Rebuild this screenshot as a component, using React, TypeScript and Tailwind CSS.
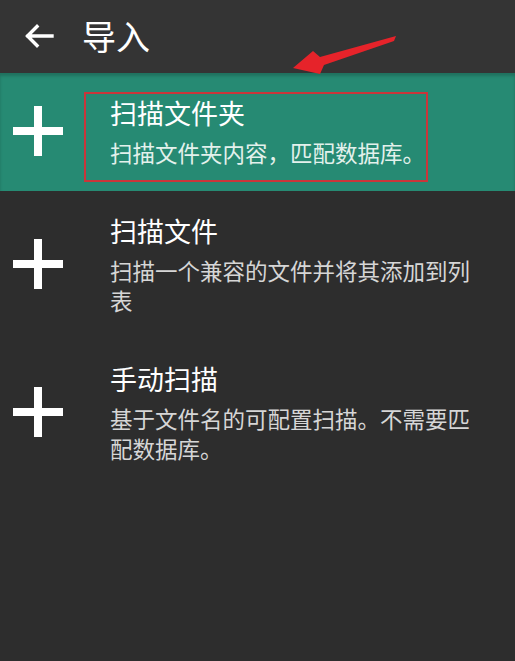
import React from "react";

const font = { fontFamily: '"Noto Sans CJK SC", "Noto Sans", sans-serif' };

function Plus() {
  return (
    <svg width="50" height="50" viewBox="0 0 50 50" className="shrink-0">
      <rect x="21" y="0" width="8" height="50" fill="#ffffff" />
      <rect x="0" y="21" width="50" height="8" fill="#ffffff" />
    </svg>
  );
}

function Row({
  title,
  sub,
  active,
  children,
}: {
  title: string;
  sub: string;
  active?: boolean;
  children?: React.ReactNode;
}) {
  return (
    <div
      className={
        "relative flex items-center pl-[13px] pr-[30px] pt-[22px] pb-[24px] " +
        (active ? "bg-[#268a73] shadow-[inset_0_3px_3px_rgba(0,0,0,0.18)]" : "")
      }
    >
      <Plus />
      <div className="ml-[47px] flex-1 flex flex-col">
        <div className="text-[27px] leading-[36px] text-white">{title}</div>
        <div
          className={
            "mt-[6px] text-[22.5px] leading-[30px] " +
            (active ? "text-[#e3f1ec]" : "text-[#d6d6d6]")
          }
        >
          {sub}
        </div>
      </div>
      {children}
    </div>
  );
}

export default function App() {
  return (
    <div className="relative min-h-screen w-full bg-[#2d2d2d]" style={font}>
      <div className="flex h-[73px] items-center bg-[#343434] pb-[2px]">
        <svg width="30" height="24" viewBox="0 0 30 24" className="ml-[24px]">
          <path
            d="M28 12 H4 M13 2.5 L3.5 12 L13 21.5"
            stroke="#ffffff"
            strokeWidth="3.4"
            fill="none"
            strokeLinecap="square"
          />
        </svg>
        <div className="ml-[28px] text-[34px] leading-none text-white">导入</div>
      </div>

      <Row title="扫描文件夹" sub="扫描文件夹内容，匹配数据库。" active>
        <div className="pointer-events-none absolute left-[84px] top-[19px] h-[90px] w-[344px] border-2 border-[#c9363a]" />
      </Row>
      <Row title="扫描文件" sub="扫描一个兼容的文件并将其添加到列表" />
      <Row title="手动扫描" sub="基于文件名的可配置扫描。不需要匹配数据库。" />

      <svg
        className="pointer-events-none absolute left-0 top-0"
        width="515"
        height="100"
        viewBox="0 0 515 100"
      >
        <polygon
          points="293,68 313,51 320,57 396,36 394,41 324,65 320,74"
          fill="#e6232a"
        />
      </svg>
    </div>
  );
}
